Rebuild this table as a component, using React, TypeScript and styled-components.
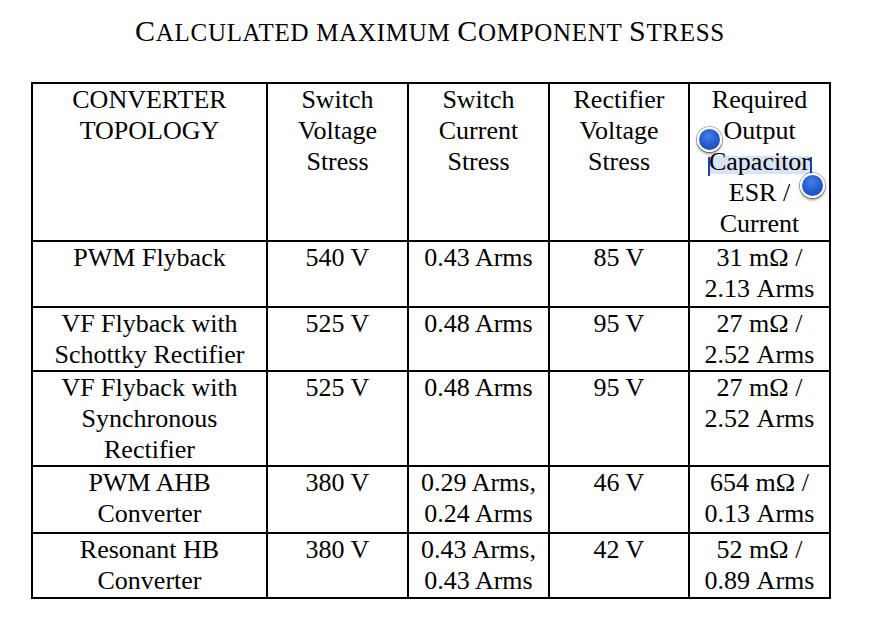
import React from "react";
import styled, { createGlobalStyle } from "styled-components";

const Global = createGlobalStyle`
  html, body { margin: 0; padding: 0; background: #fff; }
  body { font-family: "Liberation Serif", "Times New Roman", serif; color: #000; }
`;

const Page = styled.div`
  width: 798px;
  padding: 10px 0 0 31px;
`;

const Title = styled.h1`
  margin: 0;
  height: 40px;
  line-height: 40px;
  text-align: center;
  font-family: "Liberation Serif", "Times New Roman", serif;
  font-weight: normal;
  letter-spacing: 0.7px;
  white-space: nowrap;
`;

const Cap = styled.span<{ $small?: boolean }>`
  font-size: ${(p) => (p.$small ? "25px" : "30px")};
  line-height: 40px;
`;

const Table = styled.table`
  margin-top: 32px;
  width: 798px;
  table-layout: fixed;
  border-collapse: collapse;
  border: 2px solid #000;
`;

const Col = styled.col<{ $w: number }>`
  width: ${(p) => p.$w}px;
`;

const Row = styled.tr<{ $h: number }>`
  height: ${(p) => p.$h}px;
`;

const Cell = styled.td`
  border: 2px solid #000;
  padding: 0 4px;
  vertical-align: top;
  text-align: center;
  font-family: "Liberation Serif", "Times New Roman", serif;
  font-size: 26px;
  line-height: 31px;
  color: #000;
  white-space: nowrap;
`;

const Selection = styled.span`
  position: relative;
  z-index: 0;
  &::before {
    content: "";
    position: absolute;
    z-index: -1;
    left: 0;
    right: 0;
    top: 9px;
    height: 18px;
    background: #d8e3f6;
  }
`;

const Caret = styled.span<{ $side: "left" | "right" }>`
  position: absolute;
  top: 10px;
  height: 19px;
  width: 2px;
  background: #1b3fae;
  ${(p) => (p.$side === "left" ? "left: -1px;" : "right: -2px;")}
`;

const Handle = styled.span<{ $pos: "start" | "end" }>`
  position: absolute;
  width: 21px;
  height: 21px;
  border-radius: 50%;
  border: 2px solid #fff;
  background: radial-gradient(circle at 45% 35%, #437fe6 0%, #2458cf 55%, #1a45b0 100%);
  box-shadow: 0 0 0 1px rgba(0, 0, 0, 0.3), 0 2px 3px rgba(0, 0, 0, 0.45);
  ${(p) =>
    p.$pos === "start"
      ? "left: -12px; top: -20px;"
      : "right: -15px; top: 26px;"}
`;

const lines = (s: string) =>
  s.split("|").map((l, i, a) => (
    <React.Fragment key={i}>
      {l}
      {i < a.length - 1 && <br />}
    </React.Fragment>
  ));

const widths = [235, 141, 141, 140, 141];

const header = [
  "CONVERTER|TOPOLOGY",
  "Switch|Voltage|Stress",
  "Switch|Current|Stress",
  "Rectifier|Voltage|Stress",
];

const rows: { h: number; cells: string[] }[] = [
  { h: 66, cells: ["PWM Flyback", "540 V", "0.43 Arms", "85 V", "31 mΩ /|2.13 Arms"] },
  { h: 64, cells: ["VF Flyback with|Schottky Rectifier", "525 V", "0.48 Arms", "95 V", "27 mΩ /|2.52 Arms"] },
  { h: 95, cells: ["VF Flyback with|Synchronous|Rectifier", "525 V", "0.48 Arms", "95 V", "27 mΩ /|2.52 Arms"] },
  { h: 67, cells: ["PWM AHB|Converter", "380 V", "0.29 Arms,|0.24 Arms", "46 V", "654 mΩ /|0.13 Arms"] },
  { h: 65, cells: ["Resonant HB|Converter", "380 V", "0.43 Arms,|0.43 Arms", "42 V", "52 mΩ /|0.89 Arms"] },
];

export default function App() {
  return (
    <>
      <Global />
      <Page>
        <Title>
          <Cap>C</Cap>
          <Cap $small>ALCULATED MAXIMUM </Cap>
          <Cap>C</Cap>
          <Cap $small>OMPONENT </Cap>
          <Cap>S</Cap>
          <Cap $small>TRESS</Cap>
        </Title>
        <Table>
          <colgroup>
            {widths.map((w, i) => (
              <Col key={i} $w={w} />
            ))}
          </colgroup>
          <tbody>
            <Row $h={158}>
              {header.map((h, i) => (
                <Cell key={i}>{lines(h)}</Cell>
              ))}
              <Cell>
                Required
                <br />
                Output
                <br />
                <Selection>
                  <Handle $pos="start" />
                  <Caret $side="left" />
                  Capacitor
                  <Caret $side="right" />
                  <Handle $pos="end" />
                </Selection>
                <br />
                ESR /
                <br />
                Current
              </Cell>
            </Row>
            {rows.map((r, i) => (
              <Row key={i} $h={r.h}>
                {r.cells.map((c, j) => (
                  <Cell key={j}>{lines(c)}</Cell>
                ))}
              </Row>
            ))}
          </tbody>
        </Table>
      </Page>
    </>
  );
}
